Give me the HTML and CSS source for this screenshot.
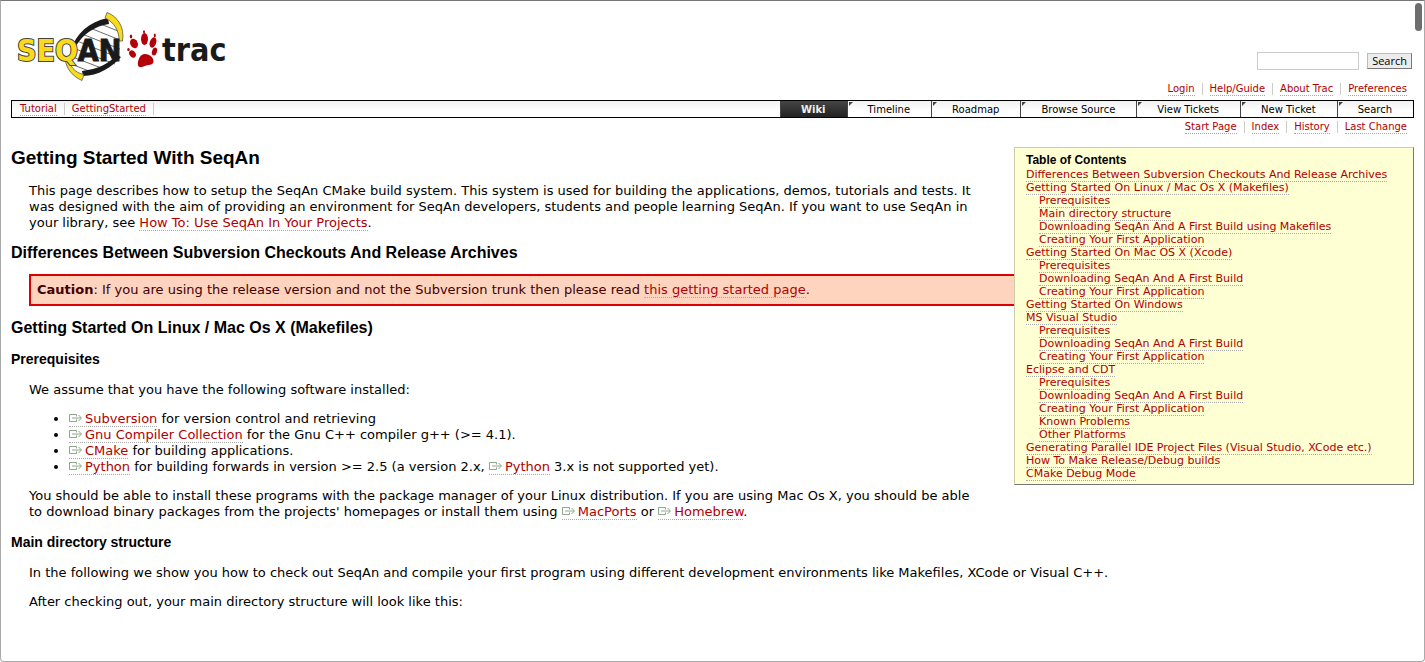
FILE: index.html
```html
<!DOCTYPE html>
<html lang="en">
<head>
<meta charset="utf-8">
<title>Getting Started With SeqAn</title>
<link rel="stylesheet" href="styles.css">
</head>
<body>
<svg class="defs" aria-hidden="true">
  <symbol id="ext" viewBox="0 0 13 9"><path d="M7.5 2.500v-2h-7v7h7v-2M3 4h9M9.500 1l3 3-3 3" fill="none" stroke="#8fa78a"/></symbol>
</svg>
<div class="window">
  <div class="thumb"></div>
  <header class="banner">
    <a class="logo" href="#" aria-label="SeqAn trac">
      <svg width="210" height="72" viewBox="16 11 210 72">
        <path d="M107 20C88 24 74 40 69 58C72 66 76 72 84 74C100 72 112 66 120 56L120 38C119 30 115 24 107 20Z" fill="#fff"/>
        <path d="M98 23l20 8M90 28l30 12M82 34l38 15M77 41l40 16M73 48l42 16M70 56l34 13M71 64l18 7" stroke="#444" stroke-width=".8"/>
        <path d="M108 18C88 22 76 34 71 50L76 46C83 34 95 26 109 24Z" fill="#1a1a1a"/>
        <path d="M82 71C98 69 108 64 117 55L121 57C112 67 98 76 83 76Z" fill="#1a1a1a"/>
        <path d="M107 12.500C117 16 125 27 122.500 41L119 41C119.500 31 114 22 105 18Z" fill="#f8dc1c" stroke="#444" stroke-width=".7"/>
        <path d="M68 56C69 66 75 73 84 74.500L82 80.500C74 77 66 70 65 58Z" fill="#f8dc1c" stroke="#444" stroke-width=".7"/>
        <text x="17" y="61" class="logo-seq">SEQ<tspan class="logo-an">AN</tspan></text>
        <g fill="#b5000a">
          <ellipse cx="134" cy="43.500" rx="3.700" ry="5" transform="rotate(-25 134 43.500)"/>
          <ellipse cx="144.500" cy="39" rx="3.500" ry="6"/>
          <ellipse cx="153" cy="42.500" rx="3.200" ry="5.300" transform="rotate(18 153 42.500)"/>
          <ellipse cx="132.500" cy="54" rx="3" ry="4" transform="rotate(-35 132.500 54)"/>
          <ellipse cx="128.500" cy="49.500" rx="1.300" ry="1.500"/>
          <ellipse cx="131" cy="36.500" rx="1.200" ry="2"/>
          <ellipse cx="144" cy="31.800" rx="1" ry="1.600"/>
          <ellipse cx="154.800" cy="35.500" rx="1" ry="2"/>
          <ellipse cx="154.500" cy="51.500" rx="2.500" ry="4" transform="rotate(18 154.500 51.500)"/>
          <path d="M145 54C150 54 154 58 153.500 62C152.500 65.500 148 64.500 145 66C141 68 138 67.500 137.800 64C138 60 140 54 145 54Z"/>
        </g>
        <text x="162" y="61" class="logo-trac">trac</text>
      </svg>
    </a>
    <form class="search">
      <input type="text" aria-label="Search query">
      <button type="button">Search</button>
    </form>
  </header>
  <nav class="links meta">
    <a href="#">Login</a><a href="#">Help/Guide</a><a href="#">About Trac</a><a href="#">Preferences</a>
  </nav>
  <div class="bar">
    <nav class="links trail"><a href="#">Tutorial</a><a href="#">GettingStarted</a><span></span></nav>
    <nav class="tabs">
      <a class="active" href="#">Wiki</a><a href="#">Timeline</a><a href="#">Roadmap</a><a href="#">Browse Source</a><a href="#">View Tickets</a><a href="#">New Ticket</a><a href="#">Search</a>
    </nav>
  </div>
  <nav class="links context">
    <a href="#">Start Page</a><a href="#">Index</a><a href="#">History</a><a href="#">Last Change</a>
  </nav>
  <main>
    <aside class="toc">
      <h4>Table of Contents</h4>
      <ol>
        <li><a href="#">Differences Between Subversion Checkouts And Release Archives</a></li>
        <li><a href="#">Getting Started On Linux / Mac Os X (Makefiles)</a>
          <ol>
            <li><a href="#">Prerequisites</a></li>
            <li><a href="#">Main directory structure</a></li>
            <li><a href="#">Downloading SeqAn And A First Build using Makefiles</a></li>
            <li><a href="#">Creating Your First Application</a></li>
          </ol></li>
        <li><a href="#">Getting Started On Mac OS X (Xcode)</a>
          <ol>
            <li><a href="#">Prerequisites</a></li>
            <li><a href="#">Downloading SeqAn And A First Build</a></li>
            <li><a href="#">Creating Your First Application</a></li>
          </ol></li>
        <li><a href="#">Getting Started On Windows</a></li>
        <li><a href="#">MS Visual Studio</a>
          <ol>
            <li><a href="#">Prerequisites</a></li>
            <li><a href="#">Downloading SeqAn And A First Build</a></li>
            <li><a href="#">Creating Your First Application</a></li>
          </ol></li>
        <li><a href="#">Eclipse and CDT</a>
          <ol>
            <li><a href="#">Prerequisites</a></li>
            <li><a href="#">Downloading SeqAn And A First Build</a></li>
            <li><a href="#">Creating Your First Application</a></li>
            <li><a href="#">Known Problems</a></li>
            <li><a href="#">Other Platforms</a></li>
          </ol></li>
        <li><a href="#">Generating Parallel IDE Project Files (Visual Studio, XCode etc.)</a></li>
        <li><a href="#">How To Make Release/Debug builds</a></li>
        <li><a href="#">CMake Debug Mode</a></li>
      </ol>
    </aside>
    <h1>Getting Started With SeqAn</h1>
    <p>This page describes how to setup the SeqAn CMake build system. This system is used for building the applications, demos, tutorials and tests. It was designed with the aim of providing an environment for SeqAn developers, students and people learning SeqAn. If you want to use SeqAn in your library, see <a href="#">How To: Use SeqAn In Your Projects</a>.</p>
    <h2>Differences Between Subversion Checkouts And Release Archives</h2>
    <div class="caution"><strong>Caution</strong>: If you are using the release version and not the Subversion trunk then please read <a href="#">this getting started page</a>.</div>
    <h2>Getting Started On Linux / Mac Os X (Makefiles)</h2>
    <h3>Prerequisites</h3>
    <p>We assume that you have the following software installed:</p>
    <ul>
      <li><a href="#"><svg class="ext"><use href="#ext"/></svg>Subversion</a> for version control and retrieving</li>
      <li><a href="#"><svg class="ext"><use href="#ext"/></svg>Gnu Compiler Collection</a> for the Gnu C++ compiler g++ (&gt;= 4.1).</li>
      <li><a href="#"><svg class="ext"><use href="#ext"/></svg>CMake</a> for building applications.</li>
      <li><a href="#"><svg class="ext"><use href="#ext"/></svg>Python</a> for building forwards in version &gt;= 2.5 (a version 2.x, <a href="#"><svg class="ext"><use href="#ext"/></svg>Python</a> 3.x is not supported yet).</li>
    </ul>
    <p>You should be able to install these programs with the package manager of your Linux distribution. If you are using Mac Os X, you should be able to download binary packages from the projects' homepages or install them using <a href="#"><svg class="ext"><use href="#ext"/></svg>MacPorts</a> or <a href="#"><svg class="ext"><use href="#ext"/></svg>Homebrew</a>.</p>
    <h3>Main directory structure</h3>
    <p>In the following we show you how to check out SeqAn and compile your first program using different development environments like Makefiles, XCode or Visual C++.</p>
    <p>After checking out, your main directory structure will look like this:</p>
  </main>
</div>
</body>
</html>
```
FILE: styles.css
```css
* { box-sizing: border-box; }
body {
  margin: 0;
  background: #fff;
  color: #000;
  font: 13px/16px Verdana, "DejaVu Sans", sans-serif;
}
a { color: #b00000; text-decoration: none; border-bottom: 1px dotted #aaa; }
.defs { position: absolute; width: 0; height: 0; }
.window {
  position: relative;
  min-height: 100vh;
  padding: 10px;
  border: 1px solid #aaa;
  border-top-color: #777;
  border-radius: 0 0 4px 4px;
}
.thumb {
  position: absolute;
  top: 2px;
  right: 2px;
  width: 7px;
  height: 28px;
  border-radius: 4px;
  background: #6e6e6e;
}
.banner { display: flex; justify-content: space-between; align-items: flex-end; padding: 0 2px 0 5px; height: 70px; }
.logo { border: 0; height: 70px; }
.logo svg { display: block; }
.logo-seq, .logo-trac { font: bold 30px "DejaVu Sans Condensed", sans-serif; }
.logo-seq { fill: #f8dc1c; stroke: #444; stroke-width: 2px; paint-order: stroke; }
.logo-an { fill: #1a1a1a; stroke: #1a1a1a; stroke-width: 1px; }
.logo-trac { font-size: 32px; fill: #1a1a1a; }
.search { display: flex; align-items: center; gap: 8px; padding-bottom: 11px; }
.search input { width: 102px; height: 18px; border: 1px solid #ccc; padding: 0 2px; font: inherit; }
.search button {
  height: 16px;
  padding: 0 4px;
  border: 1px solid #bbb;
  border-right-color: #777;
  border-bottom-color: #777;
  background: #ececec;
  color: #000;
  font: 11px/12px "Open Sans", sans-serif;
}
.links { display: flex; align-items: center; font-size: 10px; line-height: 12px; }
.links > * + * { margin-left: 15px; position: relative; }
.links > * + *::before {
  content: "";
  position: absolute;
  left: -8px;
  top: 0;
  height: 12px;
  border-left: 1px solid #ccc;
}
.meta, .context { justify-content: flex-end; padding-right: 7px; height: 19px; }
.meta { padding-bottom: 3px; }
.bar {
  display: flex;
  justify-content: space-between;
  height: 18px;
  border: 1px solid #000;
  background: linear-gradient(#f0f0f0, #fff 60%);
}
.trail { padding-left: 8px; }
.trail span { height: 12px; }
.tabs { display: flex; font-size: 10px; line-height: 17px; }
.tabs a {
  padding: 0 21px 0 20px;
  position: relative;
  color: #000;
  border: 0;
  border-left: 1px solid #444;
}
.tabs a:not(.active)::before {
  content: "";
  position: absolute;
  left: 1px;
  top: 1px;
  border: 2px solid #444;
  border-right-color: transparent;
  border-bottom-color: transparent;
}
.tabs .active { background: linear-gradient(#454545, #222); color: #eee; font-weight: bold; }
main { padding-top: 10px; }
h1, h2, h3, h4 { margin: 0; font-family: Arial, "Liberation Sans", sans-serif; font-weight: bold; }
h1 { font-size: 19px; line-height: 21px; }
h2 { font-size: 16px; line-height: 18px; margin: 12px 0; }
h3 { font-size: 14px; line-height: 18px; margin: 13px 0 14px; }
p { margin: 13px 18px; }
h1 + p { margin-top: 15px; }
.caution {
  margin: 12px 18px 13px;
  padding: 6px;
  border: 2px solid #d00;
  background: #ffd4bf;
  color: #400;
}
ul { margin: 13px 0; padding-left: 58px; }
.ext { width: 13px; height: 9px; margin-right: 3px; }
.toc {
  float: right;
  min-width: 400px;
  margin: 0 0 13px 32px;
  padding: 5px 11px 4px;
  border: 1px solid #cccca8;
  border-right-color: #777;
  border-bottom-color: #777;
  background: #ffffd4;
  font-size: 11px;
  line-height: 13px;
}
.toc h4 { font-size: 12px; line-height: 15px; }
.toc ol { list-style: none; margin: 0; padding: 0; }
.toc ol ol { padding-left: 13px; }
```
